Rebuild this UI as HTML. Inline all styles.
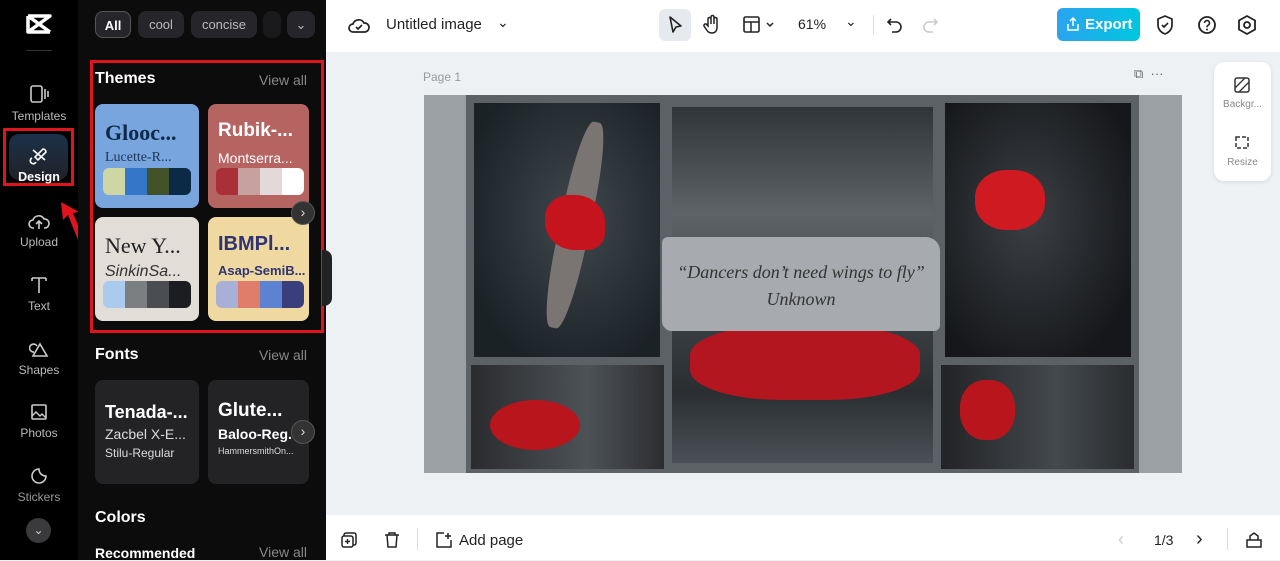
<!DOCTYPE html>
<html><head><style>
*{box-sizing:border-box;margin:0;padding:0}
body{width:1280px;height:560px;overflow:hidden;font-family:"Liberation Sans",sans-serif;background:#eef1f4;position:relative}
.a{position:absolute}
.rail{left:0;top:0;width:78px;height:560px;background:#000}
.ri{position:absolute;left:0;width:78px;text-align:center;color:#bbb;font-size:12px}
.ri svg{display:block;margin:0 auto 4px}
.panel{left:78px;top:0;width:248px;height:560px;background:#0c0c0d}
.chip{position:absolute;top:11px;height:27px;border-radius:8px;background:#26262a;color:#bbb;font-size:13px;line-height:27px;text-align:center}
.h{position:absolute;color:#fff;font-weight:bold;font-size:16px}
.va{position:absolute;color:#888;font-size:14px;left:259px}
.card{position:absolute;width:104px;height:104px;border-radius:8px;overflow:hidden}
.card .t1{position:absolute;left:10px;top:16px;font-size:22px;font-weight:bold;white-space:nowrap}
.card .t2{position:absolute;left:10px;top:46px;font-size:14px;white-space:nowrap}
.pal{position:absolute;left:8px;top:64px;width:88px;height:27px;border-radius:6px;overflow:hidden;display:flex}
.pal i{flex:1}
.photo{position:absolute}
</style></head><body>
<div class="a rail"></div>
<svg class="a" style="left:25px;top:13px" width="28" height="22" viewBox="0 0 28 22"><path d="M3 3h22L3 19h22M3 3l22 16M3 19V3" stroke="#fff" stroke-width="3.5" fill="none" stroke-linejoin="round"/></svg>
<div class="a" style="left:26px;top:50px;width:26px;height:1px;background:#333"></div>
<div class="ri" style="top:83px"><svg width="20" height="22"><rect x="2" y="3" width="11" height="16" rx="2" fill="none" stroke="#ccc" stroke-width="1.6"/><path d="M16 6v10M19 8v6" stroke="#ccc" stroke-width="1.6"/></svg>Templates</div>
<div class="a" style="left:3px;top:128px;width:71px;height:58px;border:3px solid #e0141c"></div>
<div class="a" style="left:9px;top:134px;width:59px;height:46px;border-radius:10px;background:linear-gradient(#1b3148,#202228)"></div>
<div class="ri" style="top:146px;color:#fff;font-weight:bold;font-size:12.5px"><svg width="20" height="20"><path d="M4 4l12 10M14 3a3 3 0 0 1 3 3l-8 8-3-3zM3 12a3 3 0 1 0 4 4" fill="none" stroke="#fff" stroke-width="1.6"/></svg>Design</div>
<svg class="a" style="left:55px;top:198px" width="26" height="46"><path d="M6 4l2 18 5-5 10 25 5-3-10-24 6-1z" fill="#e0141c"/></svg>
<div class="ri" style="top:211px"><svg width="22" height="20"><path d="M6 17H5a4 4 0 0 1 0-8 6 6 0 0 1 11-1 4 4 0 0 1 1 9h-1M11 18V11M8 13l3-3 3 3" fill="none" stroke="#ccc" stroke-width="1.6"/></svg>Upload</div>
<div class="ri" style="top:275px"><svg width="20" height="20"><path d="M3 3h14M10 3v15M3 3v3M17 3v3" stroke="#ccc" stroke-width="1.6" fill="none"/></svg>Text</div>
<div class="ri" style="top:339px"><svg width="20" height="20"><path d="M11 5l7 12H4z M8 7a4 4 0 1 0 -3 6" stroke="#ccc" stroke-width="1.6" fill="none"/></svg>Shapes</div>
<div class="ri" style="top:402px"><svg width="20" height="20"><rect x="3" y="3" width="14" height="14" rx="1" fill="none" stroke="#ccc" stroke-width="1.6"/><path d="M3 14l4-4 4 4 2-2 4 4" stroke="#ccc" stroke-width="1.4" fill="none"/></svg>Photos</div>
<div class="ri" style="top:466px;color:#999"><svg width="20" height="20"><path d="M10 3a7 7 0 1 0 7 7c-4 0-7-3-7-7z" stroke="#ccc" stroke-width="1.6" fill="none"/></svg>Stickers</div>
<div class="a" style="left:26px;top:518px;width:25px;height:25px;border-radius:50%;background:#3a3a3d;color:#ccc;text-align:center;font-size:12px;line-height:25px">⌄</div>

<div class="a panel"></div>
<div class="chip" style="left:95px;width:36px;border:1px solid #555;color:#fff;font-weight:bold">All</div>
<div class="chip" style="left:138px;width:46px">cool</div>
<div class="chip" style="left:191px;width:66px">concise</div>
<div class="chip" style="left:263px;width:18px;background:#1a1a1c"></div>
<div class="chip" style="left:287px;width:28px">⌄</div>
<div class="a" style="left:90px;top:60px;width:234px;height:273px;border:3px solid #e0141c"></div>
<div class="h" style="left:95px;top:70px">Themes</div><div class="va" style="top:72px">View all</div>
<div class="card" style="left:95px;top:104px;background:#79a5df"><div class="t1" style="color:#0d2a4a;font-family:'Liberation Serif',serif">Glooc...</div><div class="t2" style="color:#1c3758;font-family:'Liberation Serif',serif">Lucette-R...</div><div class="pal"><i style="background:#cfd6a6"></i><i style="background:#3477c9"></i><i style="background:#435228"></i><i style="background:#0a2a45"></i></div></div>
<div class="card" style="left:208px;top:104px;width:101px;background:#b56461"><div class="t1" style="color:#fff;font-size:19px">Rubik-...</div><div class="t2" style="color:#fff">Montserra...</div><div class="pal"><i style="background:#a93037"></i><i style="background:#c7a0a0"></i><i style="background:#e4d9d9"></i><i style="background:#fff"></i></div></div>
<div class="card" style="left:95px;top:217px;background:#e2ddd7"><div class="t1" style="color:#222;font-weight:normal;font-family:'Liberation Serif',serif">New Y...</div><div class="t2" style="color:#333;font-style:italic;font-size:16px">SinkinSa...</div><div class="pal"><i style="background:#a8cbee"></i><i style="background:#7b7f82"></i><i style="background:#4a4d52"></i><i style="background:#1c1d21"></i></div></div>
<div class="card" style="left:208px;top:217px;width:101px;background:#efd9a0"><div class="t1" style="color:#2f3474;font-size:20px">IBMPl...</div><div class="t2" style="color:#2f3474;font-weight:bold;font-size:13px">Asap-SemiB...</div><div class="pal"><i style="background:#a9b0d8"></i><i style="background:#df7d6a"></i><i style="background:#5e82d2"></i><i style="background:#3b3e7d"></i></div></div>
<div class="a" style="left:291px;top:201px;width:24px;height:24px;border-radius:50%;background:#333;border:1px solid #555;color:#ddd;text-align:center;line-height:21px;font-size:14px">›</div>
<div class="h" style="left:95px;top:346px">Fonts</div><div class="va" style="top:347px">View all</div>
<div class="card" style="left:95px;top:380px;background:#232326;height:104px"><div class="t1" style="color:#fff;font-size:18px;top:22px">Tenada-...</div><div class="t2" style="color:#ddd;top:46px">Zacbel X-E...</div><div class="t2" style="color:#ddd;top:66px;font-size:12px">Stilu-Regular</div></div>
<div class="card" style="left:208px;top:380px;width:101px;background:#232326;height:104px"><div class="t1" style="color:#fff;font-size:19px;top:20px">Glute...</div><div class="t2" style="color:#fff;font-weight:bold;top:46px">Baloo-Reg.</div><div class="t2" style="color:#ddd;top:66px;font-size:9px">HammersmithOn...</div></div>
<div class="a" style="left:291px;top:420px;width:24px;height:24px;border-radius:50%;background:#333;border:1px solid #555;color:#ddd;text-align:center;line-height:21px;font-size:14px">›</div>
<div class="h" style="left:95px;top:509px">Colors</div>
<div class="h" style="left:95px;top:545px;font-size:14px">Recommended</div><div class="va" style="top:544px">View all</div>
<div class="a" style="left:322px;top:250px;width:10px;height:56px;background:#222;border-radius:0 8px 8px 0"></div>

<!-- top bar -->
<div class="a" style="left:326px;top:0;width:954px;height:52px;background:#fff"></div>
<svg class="a" style="left:348px;top:15px" width="22" height="20"><path d="M6 17H5a4 4 0 0 1 0-8 6 6 0 0 1 11-1 4 4 0 0 1 1 9H6zM8 12l2 2 4-4" fill="none" stroke="#222" stroke-width="1.7"/></svg>
<div class="a" style="left:386px;top:16px;font-size:15px;color:#222">Untitled image</div>
<div class="a" style="left:497px;top:14px;font-size:14px;color:#222">⌄</div>
<div class="a" style="left:659px;top:9px;width:32px;height:32px;border-radius:6px;background:#e6e9ee"></div>
<svg class="a" style="left:666px;top:15px" width="18" height="20"><path d="M4 2l11 9-5 1-3 5z" fill="none" stroke="#222" stroke-width="1.6" stroke-linejoin="round"/></svg>
<svg class="a" style="left:702px;top:14px" width="20" height="22"><path d="M6 12V5a1.5 1.5 0 0 1 3 0v5V3a1.5 1.5 0 0 1 3 0v7V5a1.5 1.5 0 0 1 3 0v8c0 4-2 6-5 6s-4-1-6-4l-2-3a1.5 1.5 0 0 1 3-1z" fill="none" stroke="#222" stroke-width="1.5"/></svg>
<svg class="a" style="left:742px;top:15px" width="34" height="20"><rect x="2" y="2" width="15" height="15" rx="1.5" fill="none" stroke="#222" stroke-width="1.6"/><path d="M2 7h15M9 7v10M25 8l3 3 3-3" fill="none" stroke="#222" stroke-width="1.5"/></svg>
<div class="a" style="left:798px;top:16px;font-size:14px;color:#222">61%</div>
<div class="a" style="left:845px;top:13px;font-size:14px;color:#222">⌄</div>
<div class="a" style="left:873px;top:15px;width:1px;height:20px;background:#ddd"></div>
<svg class="a" style="left:885px;top:15px" width="20" height="20"><path d="M6 4L3 7l3 3M3 7h8a5 5 0 0 1 0 10H7" fill="none" stroke="#222" stroke-width="1.6"/></svg>
<svg class="a" style="left:920px;top:15px" width="20" height="20"><path d="M14 4l3 3-3 3M17 7H9a5 5 0 0 0 0 10h4" fill="none" stroke="#ccc" stroke-width="1.6"/></svg>
<div class="a" style="left:1057px;top:8px;width:83px;height:33px;border-radius:6px;background:linear-gradient(90deg,#2aa4f0,#00c6e0);color:#fff;font-weight:bold;font-size:15px;line-height:33px;padding-left:28px">Export</div>
<svg class="a" style="left:1066px;top:16px" width="14" height="16"><path d="M7 10V2M4 5l3-3 3 3M2 8v6h10V8" fill="none" stroke="#fff" stroke-width="1.5"/></svg>
<svg class="a" style="left:1155px;top:14px" width="20" height="22"><path d="M10 2l7 3v6c0 5-4 8-7 9-3-1-7-4-7-9V5zM7 11l2 2 4-4" fill="none" stroke="#222" stroke-width="1.7"/></svg>
<svg class="a" style="left:1196px;top:14px" width="22" height="22"><circle cx="11" cy="11" r="8" fill="none" stroke="#222" stroke-width="1.8"/><path d="M8.5 9a2.5 2.5 0 1 1 3.5 2.3c-1 .5-1 1-1 2" fill="none" stroke="#222" stroke-width="1.6"/><circle cx="11" cy="15.5" r="1" fill="#222"/></svg>
<svg class="a" style="left:1236px;top:14px" width="22" height="22"><path d="M11 2l8 4.5v9L11 20l-8-4.5v-9z" fill="none" stroke="#222" stroke-width="1.8"/><circle cx="11" cy="11" r="3" fill="none" stroke="#222" stroke-width="1.8"/></svg>

<!-- canvas -->
<div class="a" style="left:423px;top:70px;font-size:12px;color:#999">Page 1</div>
<div class="a" style="left:1134px;top:66px;font-size:13px;color:#666">⧉ &nbsp;···</div>
<div class="a" style="left:1214px;top:62px;width:57px;height:119px;border-radius:10px;background:#fff;box-shadow:0 1px 4px rgba(0,0,0,.1)"></div>
<svg class="a" style="left:1233px;top:76px" width="18" height="18"><rect x="2" y="2" width="14" height="14" rx="2" fill="none" stroke="#333" stroke-width="1.5"/><path d="M2 12L12 2M6 16L16 6" stroke="#333" stroke-width="1.3"/></svg>
<div class="a" style="left:1214px;top:99px;width:57px;text-align:center;font-size:10px;color:#888">Backgr...</div>
<svg class="a" style="left:1233px;top:133px" width="18" height="18"><rect x="3" y="4" width="12" height="11" fill="none" stroke="#333" stroke-width="1.5" stroke-dasharray="4 2"/></svg>
<div class="a" style="left:1214px;top:157px;width:57px;text-align:center;font-size:10px;color:#888">Resize</div>

<div class="a" style="left:424px;top:95px;width:758px;height:378px;background:#9ba0a4"></div>
<div class="a" style="left:466px;top:95px;width:673px;height:378px;background:#5c6165"></div>
<div class="photo" style="left:474px;top:103px;width:186px;height:254px;background:radial-gradient(ellipse at 55% 45%,#3f484d,#1b2226 80%)"></div>
<div class="a" style="left:560px;top:120px;width:30px;height:210px;border-radius:40%;background:#7a7472;transform:rotate(12deg)"></div>
<div class="a" style="left:545px;top:195px;width:60px;height:55px;border-radius:40% 50% 30% 50%;background:#c5141e"></div>
<div class="photo" style="left:672px;top:107px;width:261px;height:356px;background:linear-gradient(#2f3538,#5d6367 30%,#3a3f43 60%,#2a2e31 80%,#4a5055)"></div>
<div class="a" style="left:690px;top:325px;width:230px;height:75px;border-radius:40%;background:#b41620"></div>
<div class="photo" style="left:945px;top:103px;width:186px;height:254px;background:radial-gradient(ellipse at 45% 45%,#3c3f44,#15171a 80%)"></div>
<div class="a" style="left:975px;top:170px;width:70px;height:60px;border-radius:45%;background:#cf1a22"></div>
<div class="photo" style="left:471px;top:365px;width:193px;height:104px;background:linear-gradient(90deg,#2a2b2e,#4d5256 60%,#2c2d30)"></div>
<div class="a" style="left:490px;top:400px;width:90px;height:50px;border-radius:50%;background:#b8151d"></div>
<div class="photo" style="left:941px;top:365px;width:193px;height:104px;background:linear-gradient(90deg,#222326,#44494d 60%,#2a2c2f)"></div>
<div class="a" style="left:960px;top:380px;width:55px;height:60px;border-radius:45%;background:#b8151d"></div>
<div class="a" style="left:662px;top:237px;width:278px;height:94px;background:#a7aaae;border-radius:6px 14px 6px 10px"></div>
<div class="a" style="left:662px;top:259px;width:278px;text-align:center;font-family:'Liberation Serif',serif;font-style:italic;font-size:18px;color:#333;line-height:27px">“Dancers don’t need wings to fly”<br>Unknown</div>

<!-- bottom bar -->
<div class="a" style="left:326px;top:515px;width:954px;height:45px;background:#fff"></div>
<svg class="a" style="left:340px;top:531px" width="18" height="18"><rect x="4" y="2" width="12" height="12" rx="2" fill="none" stroke="#222" stroke-width="1.5"/><rect x="2" y="5" width="11" height="11" rx="2" fill="#fff" stroke="#222" stroke-width="1.5"/><path d="M7.5 8v5M5 10.5h5" stroke="#222" stroke-width="1.4"/></svg>
<svg class="a" style="left:383px;top:531px" width="18" height="18"><path d="M2 4h14M6 4V2h6v2M4 4l1 12h8l1-12" fill="none" stroke="#222" stroke-width="1.5"/></svg>
<div class="a" style="left:417px;top:528px;width:1px;height:22px;background:#ddd"></div>
<svg class="a" style="left:435px;top:531px" width="18" height="18"><path d="M16 9v7H2V2h7M13 2v6M10 5h6" fill="none" stroke="#222" stroke-width="1.5"/></svg>
<div class="a" style="left:459px;top:532px;font-size:15px;color:#222">Add page</div>
<div class="a" style="left:1118px;top:529px;font-size:18px;color:#ccc">‹</div>
<div class="a" style="left:1154px;top:532px;font-size:14px;color:#222">1/3</div>
<div class="a" style="left:1196px;top:528px;font-size:20px;color:#222">›</div>
<div class="a" style="left:1227px;top:528px;width:1px;height:22px;background:#ddd"></div>
<svg class="a" style="left:1244px;top:530px" width="20" height="20"><path d="M3 10h14v7H3zM6 10V6l4-3 4 3v4" fill="none" stroke="#222" stroke-width="1.5"/></svg>
</body></html>
